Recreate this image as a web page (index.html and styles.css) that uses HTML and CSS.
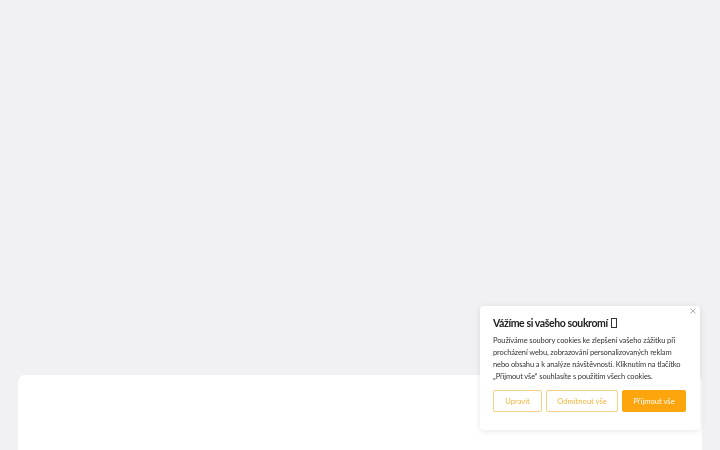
FILE: index.html
```html
<!DOCTYPE html>
<html lang="cs">
<head>
<meta charset="utf-8">
<title>Cookies</title>
<link rel="stylesheet" href="styles.css">
</head>
<body>
<div class="page">
  <div class="spacer"></div>
  <main class="card"></main>
</div>
<div class="consent" role="dialog" aria-label="Cookies">
  <button class="close" aria-label="Zavřít">
    <svg width="6" height="6" viewBox="0 0 6 6"><path d="M0.5 0.5L5.5 5.5M5.5 0.5L0.5 5.5" stroke="#a8a8ad" stroke-width="0.9" fill="none"/></svg>
  </button>
  <h2 class="title">Vážíme si vašeho soukromí <span class="tofu"></span></h2>
  <p class="text">Používáme soubory cookies ke zlepšení vašeho zážitku při procházení webu, zobrazování personalizovaných reklam nebo obsahu a k analýze návštěvnosti. Kliknutím na tlačítko „Přijmout vše“ souhlasíte s použitím všech cookies.</p>
  <div class="actions">
    <button class="btn outline">Upravit</button>
    <button class="btn outline">Odmítnout vše</button>
    <button class="btn primary">Přijmout vše</button>
  </div>
</div>
</body>
</html>
```
FILE: styles.css
```css
html, body {
  margin: 0;
  padding: 0;
  height: 100%;
  overflow: hidden;
}
body {
  background: #f1f1f4;
  font-family: "Lato", "Open Sans", sans-serif;
}
.page {
  display: flex;
  flex-direction: column;
  height: 450px;
  padding: 0 18px;
  box-sizing: border-box;
}
.spacer {
  height: 375px;
  flex: none;
}
.card {
  flex: 1;
  background: #ffffff;
  border-radius: 7px 7px 0 0;
}
.consent {
  position: fixed;
  left: 480px;
  top: 306px;
  width: 220px;
  height: 124px;
  box-sizing: border-box;
  padding: 11px 13px 0 13px;
  background: #ffffff;
  border-radius: 4px;
  box-shadow: 0 1px 6px rgba(0, 0, 0, 0.10);
}
.close {
  position: absolute;
  top: 0;
  right: 2px;
  width: 10px;
  height: 10px;
  padding: 0;
  border: 0;
  background: none;
  display: flex;
  align-items: center;
  justify-content: center;
}
.title {
  margin: 0;
  font-size: 10.5px;
  line-height: 13px;
  font-weight: 700;
  letter-spacing: -0.4px;
  color: #212121;
}
.tofu {
  display: inline-block;
  width: 4px;
  height: 8px;
  border: 1px solid #333;
  vertical-align: -1px;
  margin-left: 1px;
}
.text {
  margin: 5px 0 0 0;
  font-size: 7.5px;
  line-height: 12px;
  letter-spacing: -0.12px;
  color: #333333;
}
.actions {
  display: flex;
  gap: 4px;
  margin-top: 7px;
}
.btn {
  font-family: inherit;
  font-size: 7.6px;
  height: 22px;
  border-radius: 2px;
  padding: 0;
  cursor: pointer;
}
.outline {
  background: #ffffff;
  border: 1.5px solid #f5d186;
  color: #f2b540;
}
.btn:nth-child(1) { width: 49px; }
.btn:nth-child(2) { width: 72px; }
.primary {
  width: 64px;
  background: #fca50d;
  border: 1px solid #fca50d;
  color: #ffffff;
}
```
